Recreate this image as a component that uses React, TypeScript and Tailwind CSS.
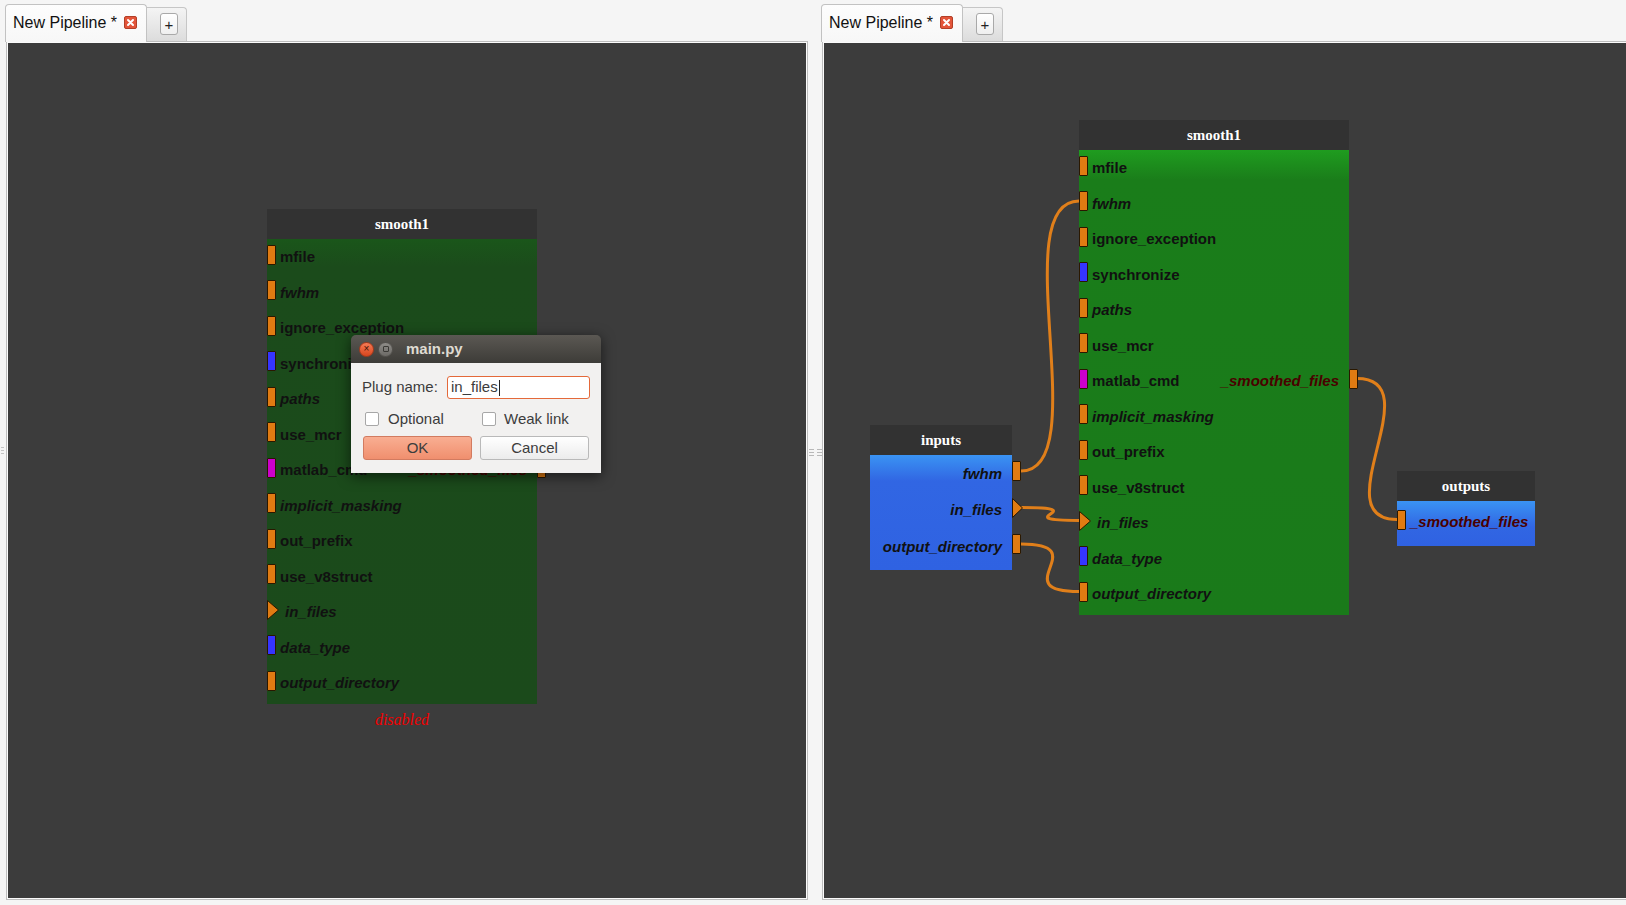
import React from 'react'

type PortColor = 'orange' | 'blue' | 'magenta'

type Plug = {
  name: string
  italic?: boolean
  color?: PortColor
  arrow?: boolean
  // pipeline outputs get the dark red label
  out?: boolean
}

type Row = { left?: Plug; right?: Plug }

const portBg: Record<PortColor, string> = {
  orange: 'bg-[#e07b12]',
  blue: 'bg-[#3535ff]',
  magenta: 'bg-[#cc00cc]',
}

const smoothRows: Row[] = [
  { left: { name: 'mfile' } },
  { left: { name: 'fwhm', italic: true } },
  { left: { name: 'ignore_exception' } },
  { left: { name: 'synchronize', color: 'blue' } },
  { left: { name: 'paths', italic: true } },
  { left: { name: 'use_mcr' } },
  {
    left: { name: 'matlab_cmd', color: 'magenta' },
    right: { name: '_smoothed_files', italic: true, out: true },
  },
  { left: { name: 'implicit_masking', italic: true } },
  { left: { name: 'out_prefix' } },
  { left: { name: 'use_v8struct' } },
  { left: { name: 'in_files', italic: true, arrow: true } },
  { left: { name: 'data_type', italic: true, color: 'blue' } },
  { left: { name: 'output_directory', italic: true } },
]

const inputRows: Row[] = [
  { right: { name: 'fwhm', italic: true } },
  { right: { name: 'in_files', italic: true, arrow: true } },
  { right: { name: 'output_directory', italic: true } },
]

const outputRows: Row[] = [{ left: { name: '_smoothed_files', italic: true, out: true } }]

function Port({ plug, side }: { plug: Plug; side: 'left' | 'right' }) {
  if (plug.arrow) {
    return side === 'left' ? (
      <svg className="absolute left-0 top-[5.5px]" width="12" height="20" viewBox="0 0 12 20">
        <polygon points="0.5,0.5 11.5,10 0.5,19.5" fill="#e07b12" stroke="#2a1800" />
      </svg>
    ) : (
      <svg className="absolute right-[-11px] top-[5.5px]" width="11" height="20" viewBox="0 0 11 20">
        <polygon points="0.5,0.5 10.5,10 0.5,19.5" fill="#e07b12" stroke="#2a1800" />
      </svg>
    )
  }
  const pos = side === 'left' ? 'left-0' : 'right-[-9px]'
  return (
    <div
      className={`absolute top-[5.5px] ${pos} h-[20px] w-[9px] rounded-[1px] border border-[#2a1800] ${portBg[plug.color ?? 'orange']}`}
    />
  )
}

function Label({ plug }: { plug: Plug }) {
  return (
    <span className={`${plug.italic ? 'italic' : ''} ${plug.out ? 'text-[#4a0000]' : 'text-[#111111]'}`}>
      {plug.name}
    </span>
  )
}

function Node({
  title,
  rows,
  className,
  body,
  rowH = 'h-[35.5px]',
  disabled,
}: {
  title: string
  rows: Row[]
  className: string
  body: string
  rowH?: string
  disabled?: boolean
}) {
  return (
    <div className={`absolute ${className}`}>
      <div className="flex h-[30px] items-center justify-center bg-[#323232] font-['Liberation_Serif',serif] text-[15px] font-bold text-white">
        {title}
      </div>
      <div className={body}>
        {rows.map((row, i) => (
          <div
            key={i}
            className={`relative flex ${rowH} pt-[8px] pr-[10px] font-['Liberation_Sans',Arial,sans-serif] text-[15px] font-bold leading-[20px] ${
              row.left?.arrow ? 'pl-[18px]' : 'pl-[13px]'
            } ${row.left ? 'justify-between' : 'justify-end'}`}
          >
            {row.left && <Port plug={row.left} side="left" />}
            {row.left && <Label plug={row.left} />}
            {row.right && <Label plug={row.right} />}
            {row.right && <Port plug={row.right} side="right" />}
          </div>
        ))}
      </div>
      {disabled && (
        <div className="mt-[7px] text-center font-['Liberation_Serif',serif] text-[16px] italic leading-[18px] text-[#f00000]">
          disabled
        </div>
      )}
    </div>
  )
}

function CloseIcon() {
  return (
    <svg width="13" height="13" viewBox="0 0 13 13">
      <rect x="0.5" y="0.5" width="12" height="12" rx="1.5" fill="#e3553a" stroke="#b23f27" />
      <path d="M4 4 L9 9 M9 4 L4 9" stroke="#fff" strokeWidth="2" strokeLinecap="round" />
    </svg>
  )
}

function Tabs() {
  return (
    <div className="flex h-[41px] items-end">
      <div className="relative z-10 -mb-px -ml-px flex h-[38px] w-[142px] items-center rounded-t-[4px] border border-b-0 border-[#c2c2c2] bg-[linear-gradient(#fdfdfd,#f7f7f7)] pb-[2px] pl-[7px]">
        <span className="text-[16px] leading-[18px] text-[#111]">New Pipeline *</span>
        <span className="ml-[7px] flex">
          <CloseIcon />
        </span>
      </div>
      <div className="flex h-[34px] w-[40px] items-start rounded-tr-[4px] border border-b-0 border-l-0 border-[#c6c6c6] bg-[linear-gradient(#f4f4f4,#dcdcdc)] pl-[13px] pt-[5px]">
        <div className="flex h-[22px] w-[18px] items-center justify-center rounded-[3px] border border-[#a9a9a9] bg-[linear-gradient(#ffffff,#efefef)] text-[15px] leading-none text-[#222]">
          +
        </div>
      </div>
    </div>
  )
}

function Handle() {
  return (
    <div className="flex gap-[3px]">
      {[0, 1].map((c) => (
        <div key={c} className="flex flex-col gap-[2px]">
          <div className="h-px w-[5px] bg-[#b8b8b8]" />
          <div className="h-px w-[5px] bg-[#b8b8b8]" />
          <div className="h-px w-[5px] bg-[#b8b8b8]" />
        </div>
      ))}
    </div>
  )
}

function Checkbox() {
  return <div className="h-[14px] w-[14px] rounded-[2px] border border-[#a7a7a7] bg-white" />
}

function PlugDialog() {
  return (
    <div className="absolute left-[343px] top-[292px] z-20 w-[250px] rounded-t-[5px] font-['Liberation_Sans',Arial,sans-serif] shadow-[0_3px_14px_rgba(0,0,0,0.6)]">
      <div className="flex h-[28px] items-center rounded-t-[5px] bg-[linear-gradient(#5b5853,#3d3c38)] pl-[8px]">
        <div className="flex h-[15px] w-[15px] items-center justify-center rounded-full border border-[#a63a1c] bg-[linear-gradient(#f57b55,#d8461e)] text-[10px] leading-none text-[#3a160b]">
          ×
        </div>
        <div className="ml-[4px] flex h-[15px] w-[15px] items-center justify-center rounded-full border border-[#55534f] bg-[linear-gradient(#8e8c88,#6c6a66)]">
          <div className="h-[6px] w-[6px] rounded-[1px] border border-[#3a3935]" />
        </div>
        <span className="ml-[13px] text-[15px] font-bold text-[#dfdbd2]">main.py</span>
      </div>
      <div className="bg-[#f2f1f0] px-[11px] pb-[13px] pt-[13px] text-[15px] text-[#3c3c3c]">
        <div className="flex h-[23px] items-center">
          <span>Plug name:</span>
          <div className="ml-auto flex h-[23px] w-[143px] items-center rounded-[3px] border border-[#e4693a] bg-white pl-[3px]">
            <span>in_files</span>
            <span className="ml-px h-[16px] w-px bg-[#222]" />
          </div>
        </div>
        <div className="mt-[13px] flex h-[14px] items-center pl-[3px]">
          <label className="flex w-[117px] items-center gap-[9px]">
            <Checkbox />
            <span>Optional</span>
          </label>
          <label className="flex items-center gap-[8px]">
            <Checkbox />
            <span>Weak link</span>
          </label>
        </div>
        <div className="mt-[10px] flex gap-[8px] pl-px">
          <button className="h-[24px] w-[109px] rounded-[3px] border border-[#d27b60] bg-[linear-gradient(#f9ae92,#f08f6e)] text-[15px] text-[#3c3c3c]">
            OK
          </button>
          <button className="h-[24px] w-[109px] rounded-[3px] border border-[#b9b9b9] bg-[linear-gradient(#ffffff,#ececec)] text-[15px] text-[#3c3c3c]">
            Cancel
          </button>
        </div>
      </div>
    </div>
  )
}

// cubic link between two plugs, horizontal tangents like the Qt pipeline view
function linkPath(x1: number, y1: number, x2: number, y2: number, d = 75) {
  return `M${x1} ${y1} C${x1 + d} ${y1} ${x2 - d} ${y2} ${x2} ${y2}`
}

const links = [
  linkPath(197, 428, 255, 158),
  linkPath(198, 464.5, 255, 477.5),
  linkPath(197, 501, 255, 548.5),
  linkPath(533, 335.5, 573, 476.5),
]

export default function App() {
  return (
    <div className="flex h-[905px] w-[1626px] overflow-hidden bg-[#f5f5f5] pb-[5px] font-['Liberation_Sans',Arial,sans-serif]">
      <div className="flex w-[6px] shrink-0 items-center justify-start pl-px">
        <div className="flex flex-col gap-[2px]">
          <div className="h-px w-[3px] bg-[#c4c4c4]" />
          <div className="h-px w-[3px] bg-[#c4c4c4]" />
          <div className="h-px w-[3px] bg-[#c4c4c4]" />
        </div>
      </div>

      {/* left pipeline: disabled node with the plug dialog */}
      <div className="flex w-[802px] shrink-0 flex-col">
        <Tabs />
        <div className="flex-1 border border-[#bdbdbd] bg-[#fbfbfb] p-px">
          <div className="relative h-full overflow-hidden bg-[#3c3c3c]">
            <Node
              title="smooth1"
              rows={smoothRows}
              className="left-[259px] top-[166px] w-[270px]"
              body="bg-[linear-gradient(to_bottom,#1a561a,#1b4b1b_28px,#1b4a1b)] pb-[3px]"
              disabled
            />
            <PlugDialog />
          </div>
        </div>
      </div>

      <div className="flex w-[14px] shrink-0 items-center justify-center pt-[4px]">
        <Handle />
      </div>

      {/* right pipeline: inputs -> smooth1 -> outputs */}
      <div className="flex w-[806px] shrink-0 flex-col">
        <Tabs />
        <div className="flex-1 border border-[#bdbdbd] bg-[#fbfbfb] p-px">
          <div className="relative h-full overflow-hidden bg-[#3c3c3c]">
            <svg className="absolute inset-0 h-full w-full" fill="none">
              {links.map((d, i) => (
                <path key={i} d={d} stroke="#e07f1a" strokeWidth="3" strokeLinecap="round" />
              ))}
            </svg>
            <Node
              title="smooth1"
              rows={smoothRows}
              className="left-[255px] top-[77px] w-[270px]"
              body="bg-[linear-gradient(to_bottom,#1f9c1f,#1a7d1a_30px,#1a7a1a)] pb-[3.5px]"
            />
            <Node
              title="inputs"
              rows={inputRows}
              rowH="h-[36.5px]"
              className="left-[46px] top-[382px] w-[142px]"
              body="bg-[linear-gradient(to_bottom,#3a93f3,#3166e3_26px,#2f62e2)] pt-[0.5px] pb-[5px]"
            />
            <Node
              title="outputs"
              rows={outputRows}
              className="left-[573px] top-[428px] w-[138px]"
              body="bg-[linear-gradient(to_bottom,#3a93f3,#3166e3_26px,#2f62e2)] pt-[3px] pb-[6.5px]"
            />
          </div>
        </div>
      </div>
    </div>
  )
}
